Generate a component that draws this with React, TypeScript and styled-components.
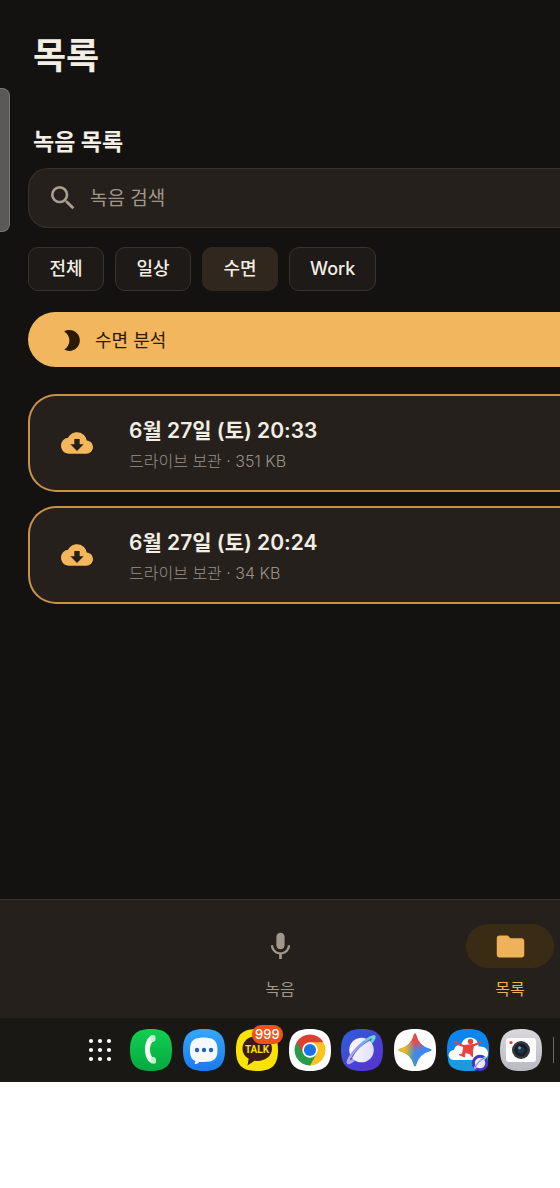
import React from 'react';
import styled, { createGlobalStyle } from 'styled-components';
import { MdBrightness2, MdCloudDownload, MdFolder, MdMic, MdSearch } from 'react-icons/md';

const GlobalStyle = createGlobalStyle`
  *, *::before, *::after { box-sizing: border-box; }
  body {
    margin: 0;
    background: #fff;
    font-family: Inter, "Noto Sans CJK KR", sans-serif;
  }
  button, input { font: inherit; }
  h1, h2, h3, p, ul { margin: 0; padding: 0; }
  ul { list-style: none; }
`;

const Screen = styled.div`
  position: relative;
  display: flex;
  flex-direction: column;
  min-height: calc(100vh - 106px);
  overflow: hidden;
  background: #131210;
  color: #f3eee4;
`;

const EdgeHandle = styled.div`
  position: absolute;
  left: 0;
  top: 88px;
  width: 10px;
  height: 144px;
  border: 1px solid #777674;
  border-left: 0;
  border-radius: 0 8px 8px 0;
  background: #5a5958;
`;

const Main = styled.main`
  flex: 1;
  display: flex;
  flex-direction: column;
  padding: 30px 0 40px 28px;
`;

const Title = styled.h1`
  padding-left: 5px;
  font-size: 36px;
  line-height: 52px;
  font-weight: 700;
`;

const Subtitle = styled.h2`
  margin-top: 42px;
  padding-left: 5px;
  font-size: 23px;
  line-height: 36px;
  font-weight: 700;
`;

const SearchBox = styled.label`
  display: flex;
  align-items: center;
  gap: 11px;
  height: 60px;
  margin-top: 8px;
  padding-left: 18px;
  border: 1px solid #38332b;
  border-right: 0;
  border-radius: 20px 0 0 20px;
  background: #25201b;
  color: #a89f93;
`;

const SearchInput = styled.input`
  flex: 1;
  min-width: 0;
  padding: 2px 0 0;
  border: 0;
  outline: 0;
  background: transparent;
  color: #f3eee4;
  font-size: 19px;
  line-height: 28px;
  &::placeholder { color: #a0978b; opacity: 1; }
`;

const Chips = styled.div`
  display: flex;
  gap: 11px;
  margin-top: 19px;
`;

const Chip = styled.button<{ $active?: boolean }>`
  min-width: 76px;
  height: 44px;
  padding: 0 20px;
  border: 1px solid ${(p) => (p.$active ? '#30271f' : '#37332d')};
  border-radius: 10px;
  background: ${(p) => (p.$active ? '#30271f' : '#1d1a17')};
  color: #f3eee4;
  font-size: 18px;
  line-height: 26px;
  font-weight: 500;
`;

const Banner = styled.button`
  display: flex;
  align-items: center;
  gap: 11px;
  height: 55px;
  margin-top: 21px;
  padding: 2px 0 0 31px;
  border: 0;
  border-radius: 28px 0 0 28px;
  background: #f2b65e;
  color: #2a1a02;
  font-size: 18px;
  line-height: 26px;
`;

const Cards = styled.ul`
  display: grid;
  gap: 14px;
  margin-top: 27px;
`;

const Card = styled.li`
  display: flex;
  align-items: center;
  gap: 36px;
  height: 98px;
  padding-left: 31px;
  border: 2px solid #c4924c;
  border-right: 0;
  border-radius: 28px 0 0 28px;
  background: #25201b;
  svg { color: #f5b75c; }
`;

const CardText = styled.div`
  padding-top: 4px;
`;

const CardTitle = styled.h3`
  font-size: 21px;
  line-height: 32px;
  font-weight: 600;
`;

const CardMeta = styled.p`
  color: #999187;
  font-size: 16px;
  line-height: 28px;
  font-weight: 300;
`;

const TabBar = styled.nav`
  display: flex;
  height: 119px;
  padding: 24px 0 0 165px;
  border-top: 1px solid #35312b;
  background: #25201b;
`;

const Tab = styled.a<{ $active?: boolean }>`
  flex: 0 0 230px;
  display: flex;
  flex-direction: column;
  align-items: center;
  gap: 9px;
  color: ${(p) => (p.$active ? '#eeb25b' : '#a1978b')};
  font-size: 16px;
  line-height: 24px;
  text-decoration: none;
`;

const TabPill = styled.span<{ $active?: boolean }>`
  display: grid;
  place-items: center;
  width: 88px;
  height: 44px;
  border-radius: 22px;
  background: ${(p) => (p.$active ? '#3a2c14' : 'transparent')};
`;

const Taskbar = styled.footer`
  display: flex;
  align-items: center;
  height: 64px;
  padding: 0 0 1px 85px;
  background: #1a1814;
`;

const DockButton = styled.button`
  position: relative;
  display: block;
  flex: none;
  padding: 0;
  border: 0;
  background: transparent;
  svg { display: block; overflow: visible; }
`;

const DockApps = styled.div`
  flex: 0 0 412px;
  display: flex;
  justify-content: space-between;
  margin-left: 15px;
`;

const Badge = styled.span`
  position: absolute;
  top: -4px;
  right: -5px;
  padding: 0 3px;
  border-radius: 9px;
  background: #f1511f;
  color: #fff;
  font-size: 13px;
  line-height: 19px;
  font-weight: 500;
`;

const DockDivider = styled.span`
  flex: none;
  width: 1px;
  height: 26px;
  margin-left: 11px;
  background: #6a6864;
`;

const squircle = 'M21 0C36 0 42 6 42 21S36 42 21 42 0 36 0 21 6 0 21 0Z';

function Tile({ fill, children }: { fill: string; children?: React.ReactNode }) {
  return (
    <svg width="42" height="42" viewBox="0 0 42 42" aria-hidden="true">
      <path d={squircle} fill={fill} />
      {children}
    </svg>
  );
}

const PhoneIcon = () => (
  <Tile fill="url(#phoneBg)">
    <defs>
      <linearGradient id="phoneBg" x1="0" y1="0" x2="0" y2="1">
        <stop offset="0" stopColor="#12cf52" />
        <stop offset="1" stopColor="#05a940" />
      </linearGradient>
    </defs>
    <path d="M22 6C17.500 8 15 14 15 20.500S17.500 32.500 22 34.500L24 29C21.500 28 20 25 20 20.500S21.500 13 24 12Z" fill="#f1fcf4" />
    <path d="M21 6.500Q24.500 5 25.500 7.500V11Q25 13 22.500 12.800L20.500 12ZM20.500 28.500 22.500 28Q25.500 27.800 26 30V33.500Q25 35.600 21 34Z" fill="#c4f0d0" />
  </Tile>
);

const MessageIcon = () => (
  <Tile fill="url(#msgBg)">
    <defs>
      <linearGradient id="msgBg" x1="0" y1="0" x2="0" y2="1">
        <stop offset="0" stopColor="#36a7fb" />
        <stop offset="1" stopColor="#1b79ed" />
      </linearGradient>
    </defs>
    <path d="M20.500 8.500C31 8.500 34.500 12 34.500 21S31 33 20.500 33h-4.500c-1 1.500-2.500 2.200-4.500 2l1-2.800C8.500 30.500 7 27 7 21 7 12 10.500 8.500 20.500 8.500Z" fill="#f5f9ff" />
    <circle cx="14" cy="21" r="2.200" fill="#2660b5" />
    <circle cx="21" cy="21" r="2.200" fill="#2660b5" />
    <circle cx="28" cy="21" r="2.200" fill="#2660b5" />
  </Tile>
);

const TalkIcon = () => (
  <Tile fill="#fae300">
    <path d="M21 7C12.500 7 6.500 12.500 6.500 19.500c0 4.500 2.300 8 6.200 10.200l-1.200 6.800 7-4.700 2.500.2c8.500 0 15-5 15-12.500S29.500 7 21 7Z" fill="#3a1a1a" />
    <text x="21" y="23.500" textAnchor="middle" fontFamily="Roboto, sans-serif" fontWeight="700" fontSize="10" fill="#fae300">TALK</text>
  </Tile>
);

const ChromeIcon = () => (
  <Tile fill="#fff">
    <g transform="translate(21 21)">
      <path d="M0 0 -13.400-7.750A15.500 15.500 0 0 1 13.400-7.750Z" fill="#dd4032" />
      <path d="M0 0-13.400-7.750A15.500 15.500 0 0 0 0 15.500Z" fill="#2a9b4c" />
      <path d="M0 0 0 15.500A15.500 15.500 0 0 0 13.400-7.750Z" fill="#fbc31c" />
      <path d="M-13.400-7.750-6.500 4 0-7.750Z" fill="#dd4032" />
      <path d="M-6.500 3.700 0 15.500 6.700 3.700Z" fill="#2a9b4c" />
      <path d="M0-7.750H13.400L6.700 3.700Z" fill="#fbc31c" />
      <circle r="7.700" fill="#fff" />
      <circle r="6.100" fill="#1b73e8" />
    </g>
  </Tile>
);

const PlanetArt = () => (
  <g transform="rotate(-45 20.500 21)" fill="none" strokeWidth="2.600">
    <path d="M2.500 20.500A18.500 3.400 0 0 0 38.500 20.500" stroke="url(#ring)" />
    <circle cx="20.500" cy="21" r="12.300" fill="url(#planet)" />
    <path d="M8.500 19.500Q20 15.500 32.500 19.500" stroke="#5b62dc" strokeWidth="1.400" />
    <path d="M8.200 22.800C3 21.800 1 21 2.500 19.800 6 17.200 13 16.600 20.500 16.600S35 17.200 38.500 19.800C40 21 38 21.800 32.800 22.800" stroke="url(#ring)" />
  </g>
);

const BrowserIcon = () => (
  <Tile fill="url(#browserBg)">
    <defs>
      <linearGradient id="browserBg" x1="0" y1="0" x2="1" y2="1">
        <stop offset="0" stopColor="#2c60d8" />
        <stop offset="1" stopColor="#5b2fd0" />
      </linearGradient>
      <linearGradient id="planet" x1="0" y1="0" x2="1" y2="1">
        <stop offset="0" stopColor="#fff" />
        <stop offset="1" stopColor="#dcd8fa" />
      </linearGradient>
      <linearGradient id="ring" gradientUnits="userSpaceOnUse" x1="2" y1="0" x2="39" y2="0">
        <stop offset="0" stopColor="#bda6f2" />
        <stop offset=".5" stopColor="#8f9bec" />
        <stop offset="1" stopColor="#5fdfcb" />
      </linearGradient>
    </defs>
    <PlanetArt />
  </Tile>
);

const spark = 'M21 5.500C23 14 28 19 36.500 21 28 23 23 28 21 36.500 19 28 14 23 5.500 21 14 19 19 14 21 5.500Z';

const SparkIcon = () => (
  <Tile fill="#fff">
    <defs>
      <linearGradient id="sparkBase" x1="0" y1=".7" x2="1" y2=".4">
        <stop offset=".15" stopColor="#4baf73" />
        <stop offset=".5" stopColor="#4387e8" />
        <stop offset="1" stopColor="#3b86f5" />
      </linearGradient>
      <radialGradient id="sparkRed" cx=".5" cy="0" r=".55">
        <stop offset=".4" stopColor="#ea4b45" />
        <stop offset="1" stopColor="#ea4b45" stopOpacity="0" />
      </radialGradient>
      <radialGradient id="sparkGold" cx="0" cy=".45" r=".5">
        <stop offset=".3" stopColor="#f2b729" />
        <stop offset="1" stopColor="#f2b729" stopOpacity="0" />
      </radialGradient>
    </defs>
    {['sparkBase', 'sparkRed', 'sparkGold'].map((id) => (
      <path key={id} d={spark} fill={`url(#${id})`} stroke={`url(#${id})`} strokeWidth="2" strokeLinejoin="round" />
    ))}
  </Tile>
);

const CloudJumpIcon = () => (
  <Tile fill="#0c86ef">
    <path d="M1 30H41Q41 42 21 42T1 30Z" fill="#1b9ae0" />
    <path d="M6.500 31C0 30.500 0 21.500 7 21 7.500 17 11 15.500 14 16.500 15 11.500 18.500 8.500 23 8.500c5 0 8.500 3.500 8.500 9 6-.5 9.500 2.500 9.500 6.500 0 5-3 7-6.500 7Z" fill="#fff" />
    <circle cx="23.500" cy="12.500" r="2.700" fill="#e8423f" />
    <path d="M8 13.500 17.500 17.500 26 16.500 33.500 13.500" fill="none" stroke="#e8423f" strokeWidth="2.200" strokeLinecap="round" strokeLinejoin="round" />
    <path d="M17 16.500 26.500 15.500 25.500 23 25.500 28 22.500 24.500 18 23.500 17.500 28 12 25.500 15.500 25Z" fill="#e8423f" stroke="#e8423f" strokeLinejoin="round" />
    <circle cx="33" cy="34" r="8.300" fill="#4536c8" />
    <g transform="translate(24.500 25.200) scale(.42)">
      <PlanetArt />
    </g>
  </Tile>
);

const CameraIcon = () => (
  <Tile fill="url(#camBg)">
    <defs>
      <linearGradient id="camBg" x1="0" y1="0" x2="0" y2="1">
        <stop offset="0" stopColor="#d9d9dd" />
        <stop offset="1" stopColor="#b9bac0" />
      </linearGradient>
    </defs>
    <rect x="6" y="9" width="30" height="24" rx="3" fill="#fafafa" />
    <circle cx="11" cy="13.500" r="1.600" fill="#e83a31" />
    <circle cx="21" cy="21" r="9" fill="#35373b" />
    <circle cx="21" cy="21" r="6.500" fill="#1b1d22" />
    <circle cx="21" cy="21" r="3.500" fill="#16394e" />
    <circle cx="19.500" cy="18.800" r="1.600" fill="#5aa2c4" />
  </Tile>
);

const DrawerIcon = () => (
  <svg width="30" height="30" viewBox="0 0 30 30" aria-hidden="true" fill="#fff">
    {[6, 15, 24].map((y) => [6, 15, 24].map((x) => <circle key={`${x}-${y}`} cx={x} cy={y} r="2.100" />))}
  </svg>
);

const recordings = [
  { title: '6월 27일 (토) 20:33', meta: '드라이브 보관 · 351 KB' },
  { title: '6월 27일 (토) 20:24', meta: '드라이브 보관 · 34 KB' },
];

const filters = ['전체', '일상', '수면', 'Work'];

const apps = [
  { name: '전화', Icon: PhoneIcon },
  { name: '메시지', Icon: MessageIcon },
  { name: '카카오톡', Icon: TalkIcon, badge: '999' },
  { name: 'Chrome', Icon: ChromeIcon },
  { name: '인터넷', Icon: BrowserIcon },
  { name: 'Gemini', Icon: SparkIcon },
  { name: '클라우드', Icon: CloudJumpIcon },
  { name: '카메라', Icon: CameraIcon },
];

export default function App() {
  return (
    <>
      <GlobalStyle />
      <Screen lang="ko">
        <Main>
          <Title>목록</Title>
          <Subtitle>녹음 목록</Subtitle>
          <SearchBox>
            <MdSearch size={32} aria-hidden="true" />
            <SearchInput type="text" placeholder="녹음 검색" aria-label="녹음 검색" />
          </SearchBox>
          <Chips>
            {filters.map((name) => (
              <Chip key={name} type="button" $active={name === '수면'} aria-pressed={name === '수면'}>
                {name}
              </Chip>
            ))}
          </Chips>
          <Banner type="button">
            <MdBrightness2 size={25} aria-hidden="true" />
            수면 분석
          </Banner>
          <Cards>
            {recordings.map((r) => (
              <Card key={r.title}>
                <MdCloudDownload size={32} aria-hidden="true" />
                <CardText>
                  <CardTitle>{r.title}</CardTitle>
                  <CardMeta>{r.meta}</CardMeta>
                </CardText>
              </Card>
            ))}
          </Cards>
        </Main>
        <TabBar>
          <Tab href="#record">
            <TabPill><MdMic size={33} aria-hidden="true" /></TabPill>
            녹음
          </Tab>
          <Tab href="#list" $active aria-current="page">
            <TabPill $active><MdFolder size={33} aria-hidden="true" /></TabPill>
            목록
          </Tab>
        </TabBar>
        <Taskbar>
          <DockButton type="button" aria-label="앱 서랍"><DrawerIcon /></DockButton>
          <DockApps>
            {apps.map(({ name, Icon, badge }) => (
              <DockButton key={name} type="button" aria-label={name}>
                <Icon />
                {badge && <Badge>{badge}</Badge>}
              </DockButton>
            ))}
          </DockApps>
          <DockDivider />
        </Taskbar>
        <EdgeHandle />
      </Screen>
    </>
  );
}
